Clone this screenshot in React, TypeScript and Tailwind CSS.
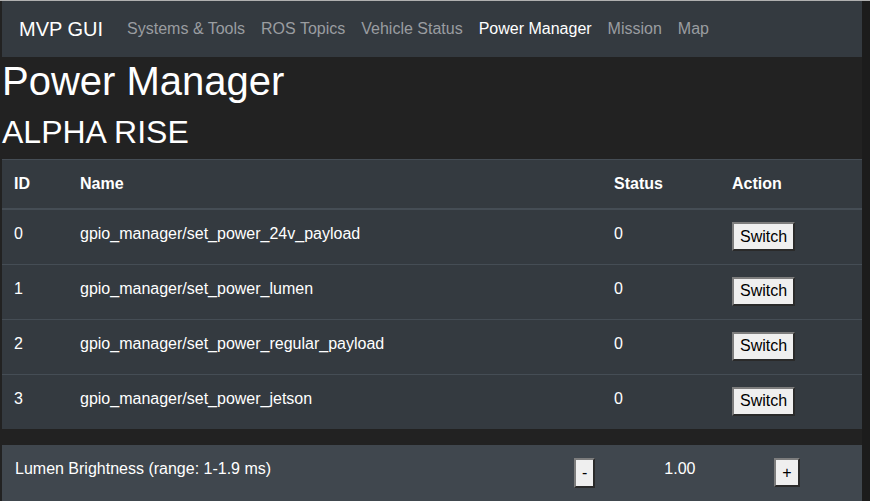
import React from 'react';

const links = ['Systems & Tools', 'ROS Topics', 'Vehicle Status', 'Power Manager', 'Mission', 'Map'];

const rows = [
  { id: 0, name: 'gpio_manager/set_power_24v_payload', status: 0 },
  { id: 1, name: 'gpio_manager/set_power_lumen', status: 0 },
  { id: 2, name: 'gpio_manager/set_power_regular_payload', status: 0 },
  { id: 3, name: 'gpio_manager/set_power_jetson', status: 0 },
];

const btn =
  'h-[29px] px-[6px] bg-[#efefef] text-black text-[16px] leading-none border-2 border-solid border-t-[#7d7d7d] border-l-[#7d7d7d] border-r-[#2a2a2a] border-b-[#2a2a2a]';

const App: React.FC = () => {
  return (
    <div
      className="h-[501px] w-[870px] overflow-hidden bg-[#222222] border-t border-[#b0b0b0] flex text-white"
      style={{ fontFamily: '"Liberation Sans", Arial, sans-serif' }}
    >
      <div className="w-[862px] pl-[2px] flex flex-col">
        {/* Navbar */}
        <nav className="h-[56px] bg-[#343a40] flex items-center pl-[17px] pr-4">
          <span className="text-[20px] leading-[30px] text-white mr-4">MVP GUI</span>
          <div className="flex">
            {links.map((l) => (
              <span
                key={l}
                className={`px-2 text-[16px] leading-6 ${
                  l === 'Power Manager' ? 'text-white' : 'text-[#9a9da0]'
                }`}
              >
                {l}
              </span>
            ))}
          </div>
        </nav>

        <h1 className="text-[40px] leading-[48px] mb-2">Power Manager</h1>
        <h2 className="text-[32px] leading-[38.4px] mb-2">ALPHA RISE</h2>

        {/* Power table */}
        <table className="w-[860px] bg-[#343a40] border-collapse text-[16px] leading-6 mb-4">
          <thead>
            <tr>
              <th className="w-[66px] p-3 text-left font-bold border-t border-b-2 border-[#454d55] align-bottom">ID</th>
              <th className="w-[534px] p-3 text-left font-bold border-t border-b-2 border-[#454d55] align-bottom">Name</th>
              <th className="w-[118px] p-3 text-left font-bold border-t border-b-2 border-[#454d55] align-bottom">Status</th>
              <th className="p-3 text-left font-bold border-t border-b-2 border-[#454d55] align-bottom">Action</th>
            </tr>
          </thead>
          <tbody>
            {rows.map((r) => (
              <tr key={r.id} className="h-[55px]">
                <td className="p-3 align-top border-t border-[#454d55]">{r.id}</td>
                <td className="p-3 align-top border-t border-[#454d55]">{r.name}</td>
                <td className="p-3 align-top border-t border-[#454d55]">{r.status}</td>
                <td className="p-3 align-top border-t border-[#454d55]">
                  <button className={btn}>Switch</button>
                </td>
              </tr>
            ))}
          </tbody>
        </table>

        {/* Lumen brightness */}
        <div className="h-[56px] bg-[#40474e] flex items-start pt-3 pl-[13px] text-[16px] leading-6">
          <span className="w-[559px]">Lumen Brightness (range: 1-1.9 ms)</span>
          <button className={`${btn} h-[30px] mt-px`}>-</button>
          <span className="ml-[69px] w-[110px]">1.00</span>
          <button className={`${btn} mt-px`}>+</button>
        </div>
      </div>
      <div className="w-[8px] bg-[#1c1c1c]" />
    </div>
  );
};

export default App;
